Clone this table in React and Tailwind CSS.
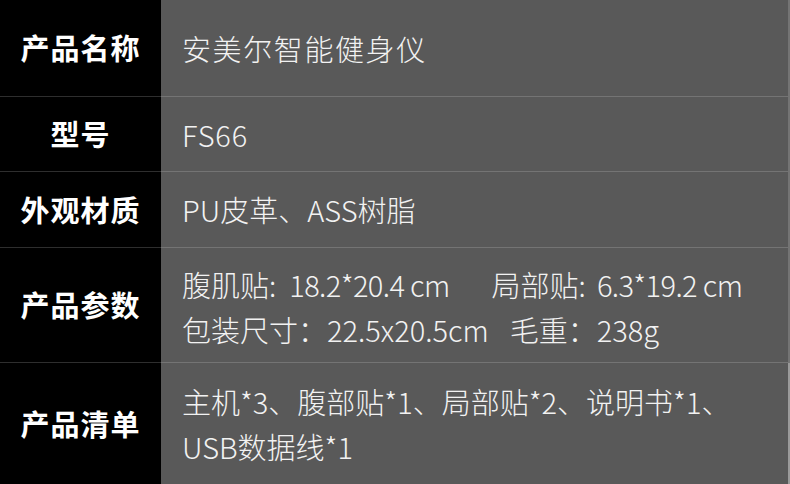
const rows = [
  { label: "产品名称", h: "h-[97px]", lines: [<span className="tracking-[1.6px]">安美尔智能健身仪</span>] },
  { label: "型号", h: "h-[75px]", lines: [<span className="tracking-[0.8px]">FS66</span>] },
  { label: "外观材质", h: "h-[76px]", lines: [<span>PU皮革、ASS树脂</span>] },
  {
    label: "产品参数",
    h: "h-[115px]",
    pad: "pt-[4px]",
    lines: [
      <>
        <span>腹肌贴:</span>
        <span className="ml-[13px] tracking-[-0.6px]">18.2*20.4 cm</span>
        <span className="ml-[42px]">局部贴:</span>
        <span className="ml-[11px] tracking-[-0.6px]">6.3*19.2 cm</span>
      </>,
      <>
        <span>包装尺寸：22.5x20.5cm</span>
        <span className="ml-[21px]">毛重：238g</span>
      </>,
    ],
  },
  {
    label: "产品清单",
    h: "h-[121px]",
    lines: [<span>主机*3、腹部贴*1、局部贴*2、说明书*1、</span>, <span>USB数据线*1</span>],
  },
];

export default function App() {
  return (
    <div
      className="w-[790px] h-[484px] bg-black flex flex-col overflow-hidden"
      style={{ fontFamily: '"Noto Sans CJK SC", "Noto Sans", sans-serif' }}
    >
      {rows.map((r, i) => (
        <div key={i} className={`flex ${r.h} shrink-0`}>
          <div
            className={`w-[161px] shrink-0 flex items-center justify-center text-[29px] font-bold text-white tracking-[1px] ${
              i < rows.length - 1 ? "border-b border-[#2e2e2e]" : ""
            }`}
          >
            {r.label}
          </div>
          <div
            className={`flex-1 bg-[#595959] border-r-2 border-[#9a9a9a] flex flex-col justify-center pl-[21px] ${r.pad || ""} ${
              i < rows.length - 1 ? "border-b border-[#747474]" : ""
            }`}
          >
            {r.lines.map((l, j) => (
              <div key={j} className="text-[29px] leading-[45px] font-light text-[#f2f2f2] whitespace-nowrap">
                {l}
              </div>
            ))}
          </div>
        </div>
      ))}
    </div>
  );
}
